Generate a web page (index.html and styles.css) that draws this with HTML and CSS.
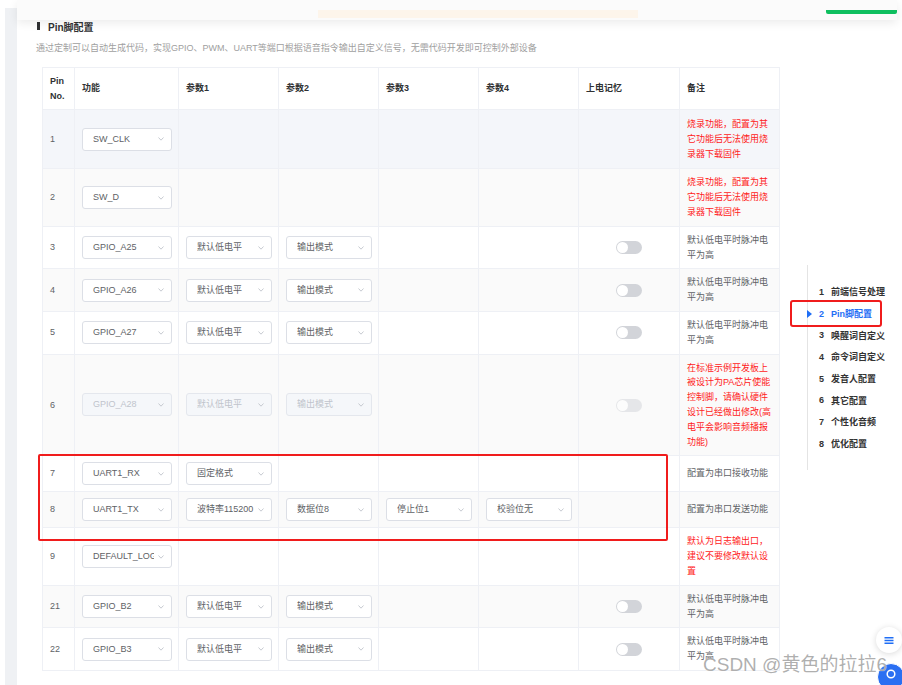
FILE: index.html
```html
<!DOCTYPE html>
<html lang="zh-CN">
<head>
<meta charset="utf-8">
<title>Pin脚配置</title>
<link rel="stylesheet" href="styles.css">
</head>
<body>
<div class="page">
  <div class="gutter"></div>
  <div class="main">
    <div class="topbar">
      <div class="tip-bar"></div>
      <div class="green-bar"></div>
    </div>
    <div class="body">
      <div class="panel">
        <div class="title"><span class="title-mark"></span><span>Pin脚配置</span></div>
        <div class="desc">通过定制可以自动生成代码，实现GPIO、PWM、UART等端口根据语音指令输出自定义信号，无需代码开发即可控制外部设备</div>
        <table class="pins">
          <colgroup>
            <col class="c-pin"><col class="c-func"><col class="c-p"><col class="c-p"><col class="c-p"><col class="c-p"><col class="c-mem"><col class="c-note">
          </colgroup>
          <thead>
            <tr>
              <th class="pin">Pin<br>No.</th><th>功能</th><th>参数1</th><th>参数2</th><th>参数3</th><th>参数4</th><th>上电记忆</th><th>备注</th>
            </tr>
          </thead>
          <tbody>
            <tr class="hover">
              <td class="pin">1</td>
              <td><div class="sel wide"><span class="val">SW_CLK</span><svg class="chev" viewBox="0 0 6 4"><polyline points="0.5,0.5 3,3.2 5.5,0.5"/></svg></div></td>
              <td></td><td></td><td></td><td></td><td></td>
              <td class="note red">烧录功能，配置为其它功能后无法使用烧录器下载固件</td>
            </tr>
            <tr class="stripe">
              <td class="pin">2</td>
              <td><div class="sel wide"><span class="val">SW_D</span><svg class="chev" viewBox="0 0 6 4"><polyline points="0.5,0.5 3,3.2 5.5,0.5"/></svg></div></td>
              <td></td><td></td><td></td><td></td><td></td>
              <td class="note red">烧录功能，配置为其它功能后无法使用烧录器下载固件</td>
            </tr>
            <tr>
              <td class="pin">3</td>
              <td><div class="sel wide"><span class="val">GPIO_A25</span><svg class="chev" viewBox="0 0 6 4"><polyline points="0.5,0.5 3,3.2 5.5,0.5"/></svg></div></td>
              <td><div class="sel"><span class="val">默认低电平</span><svg class="chev" viewBox="0 0 6 4"><polyline points="0.5,0.5 3,3.2 5.5,0.5"/></svg></div></td>
              <td><div class="sel"><span class="val">输出模式</span><svg class="chev" viewBox="0 0 6 4"><polyline points="0.5,0.5 3,3.2 5.5,0.5"/></svg></div></td>
              <td></td><td></td>
              <td class="center"><span class="switch"></span></td>
              <td class="note">默认低电平时脉冲电平为高</td>
            </tr>
            <tr class="stripe">
              <td class="pin">4</td>
              <td><div class="sel wide"><span class="val">GPIO_A26</span><svg class="chev" viewBox="0 0 6 4"><polyline points="0.5,0.5 3,3.2 5.5,0.5"/></svg></div></td>
              <td><div class="sel"><span class="val">默认低电平</span><svg class="chev" viewBox="0 0 6 4"><polyline points="0.5,0.5 3,3.2 5.5,0.5"/></svg></div></td>
              <td><div class="sel"><span class="val">输出模式</span><svg class="chev" viewBox="0 0 6 4"><polyline points="0.5,0.5 3,3.2 5.5,0.5"/></svg></div></td>
              <td></td><td></td>
              <td class="center"><span class="switch"></span></td>
              <td class="note">默认低电平时脉冲电平为高</td>
            </tr>
            <tr>
              <td class="pin">5</td>
              <td><div class="sel wide"><span class="val">GPIO_A27</span><svg class="chev" viewBox="0 0 6 4"><polyline points="0.5,0.5 3,3.2 5.5,0.5"/></svg></div></td>
              <td><div class="sel"><span class="val">默认低电平</span><svg class="chev" viewBox="0 0 6 4"><polyline points="0.5,0.5 3,3.2 5.5,0.5"/></svg></div></td>
              <td><div class="sel"><span class="val">输出模式</span><svg class="chev" viewBox="0 0 6 4"><polyline points="0.5,0.5 3,3.2 5.5,0.5"/></svg></div></td>
              <td></td><td></td>
              <td class="center"><span class="switch"></span></td>
              <td class="note">默认低电平时脉冲电平为高</td>
            </tr>
            <tr class="stripe">
              <td class="pin">6</td>
              <td><div class="sel wide disabled"><span class="val">GPIO_A28</span><svg class="chev" viewBox="0 0 6 4"><polyline points="0.5,0.5 3,3.2 5.5,0.5"/></svg></div></td>
              <td><div class="sel disabled"><span class="val">默认低电平</span><svg class="chev" viewBox="0 0 6 4"><polyline points="0.5,0.5 3,3.2 5.5,0.5"/></svg></div></td>
              <td><div class="sel disabled"><span class="val">输出模式</span><svg class="chev" viewBox="0 0 6 4"><polyline points="0.5,0.5 3,3.2 5.5,0.5"/></svg></div></td>
              <td></td><td></td>
              <td class="center"><span class="switch off"></span></td>
              <td class="note red">在标准示例开发板上被设计为PA芯片使能控制脚，请确认硬件设计已经做出修改(高电平会影响音频播报功能)</td>
            </tr>
            <tr>
              <td class="pin">7</td>
              <td><div class="sel wide"><span class="val">UART1_RX</span><svg class="chev" viewBox="0 0 6 4"><polyline points="0.5,0.5 3,3.2 5.5,0.5"/></svg></div></td>
              <td><div class="sel"><span class="val">固定格式</span><svg class="chev" viewBox="0 0 6 4"><polyline points="0.5,0.5 3,3.2 5.5,0.5"/></svg></div></td>
              <td></td><td></td><td></td><td></td>
              <td class="note">配置为串口接收功能</td>
            </tr>
            <tr class="stripe">
              <td class="pin">8</td>
              <td><div class="sel wide"><span class="val">UART1_TX</span><svg class="chev" viewBox="0 0 6 4"><polyline points="0.5,0.5 3,3.2 5.5,0.5"/></svg></div></td>
              <td><div class="sel"><span class="val">波特率115200</span><svg class="chev" viewBox="0 0 6 4"><polyline points="0.5,0.5 3,3.2 5.5,0.5"/></svg></div></td>
              <td><div class="sel"><span class="val">数据位8</span><svg class="chev" viewBox="0 0 6 4"><polyline points="0.5,0.5 3,3.2 5.5,0.5"/></svg></div></td>
              <td><div class="sel"><span class="val">停止位1</span><svg class="chev" viewBox="0 0 6 4"><polyline points="0.5,0.5 3,3.2 5.5,0.5"/></svg></div></td>
              <td><div class="sel"><span class="val">校验位无</span><svg class="chev" viewBox="0 0 6 4"><polyline points="0.5,0.5 3,3.2 5.5,0.5"/></svg></div></td>
              <td></td>
              <td class="note">配置为串口发送功能</td>
            </tr>
            <tr>
              <td class="pin">9</td>
              <td><div class="sel wide"><span class="val">DEFAULT_LOG</span><svg class="chev" viewBox="0 0 6 4"><polyline points="0.5,0.5 3,3.2 5.5,0.5"/></svg></div></td>
              <td></td><td></td><td></td><td></td><td></td>
              <td class="note red">默认为日志输出口，建议不要修改默认设置</td>
            </tr>
            <tr class="stripe">
              <td class="pin">21</td>
              <td><div class="sel wide"><span class="val">GPIO_B2</span><svg class="chev" viewBox="0 0 6 4"><polyline points="0.5,0.5 3,3.2 5.5,0.5"/></svg></div></td>
              <td><div class="sel"><span class="val">默认低电平</span><svg class="chev" viewBox="0 0 6 4"><polyline points="0.5,0.5 3,3.2 5.5,0.5"/></svg></div></td>
              <td><div class="sel"><span class="val">输出模式</span><svg class="chev" viewBox="0 0 6 4"><polyline points="0.5,0.5 3,3.2 5.5,0.5"/></svg></div></td>
              <td></td><td></td>
              <td class="center"><span class="switch"></span></td>
              <td class="note">默认低电平时脉冲电平为高</td>
            </tr>
            <tr>
              <td class="pin">22</td>
              <td><div class="sel wide"><span class="val">GPIO_B3</span><svg class="chev" viewBox="0 0 6 4"><polyline points="0.5,0.5 3,3.2 5.5,0.5"/></svg></div></td>
              <td><div class="sel"><span class="val">默认低电平</span><svg class="chev" viewBox="0 0 6 4"><polyline points="0.5,0.5 3,3.2 5.5,0.5"/></svg></div></td>
              <td><div class="sel"><span class="val">输出模式</span><svg class="chev" viewBox="0 0 6 4"><polyline points="0.5,0.5 3,3.2 5.5,0.5"/></svg></div></td>
              <td></td><td></td>
              <td class="center"><span class="switch"></span></td>
              <td class="note">默认低电平时脉冲电平为高</td>
            </tr>
          </tbody>
        </table>
      </div>
      <nav class="anchor">
        <div class="anchor-item"><span class="num">1</span>前端信号处理</div>
        <div class="anchor-item active"><span class="num">2</span>Pin脚配置</div>
        <div class="anchor-item"><span class="num">3</span>唤醒词自定义</div>
        <div class="anchor-item"><span class="num">4</span>命令词自定义</div>
        <div class="anchor-item"><span class="num">5</span>发音人配置</div>
        <div class="anchor-item"><span class="num">6</span>其它配置</div>
        <div class="anchor-item"><span class="num">7</span>个性化音频</div>
        <div class="anchor-item"><span class="num">8</span>优化配置</div>
      </nav>
    </div>
  </div>

  <div class="mark mark-table"></div>
  <div class="mark mark-nav"></div>

  <div class="fab fab-menu">
    <svg viewBox="0 0 10 7" class="fab-icon"><path d="M0.5 0.8H9.5M0.5 3.5H9.5M0.5 6.2H9.5"/></svg>
  </div>
  <div class="fab fab-blue">
    <svg viewBox="0 0 12 12" class="fab-ring"><circle cx="6" cy="6" r="3.8"/></svg>
  </div>
  <div class="watermark">CSDN @黄色的拉拉6</div>
</div>
</body>
</html>
```

FILE: styles.css
```css
html, body {
  margin: 0;
  padding: 0;
  background: #ffffff;
}

body {
  font-family: "Liberation Sans", "Noto Sans CJK SC", sans-serif;
  color: #606266;
  font-size: 9px;
}

.page {
  position: relative;
  display: flex;
  width: 902px;
  height: 685px;
  overflow: hidden;
}

.gutter {
  width: 12px;
  margin: 8px 0 0 5px;
  background: #eff1f4;
  flex: none;
}

.main {
  width: 880px;
  flex: none;
  display: flex;
  flex-direction: column;
}

.topbar {
  position: relative;
  z-index: 1;
  height: 20px;
  box-sizing: border-box;
  padding-top: 10px;
  display: flex;
  align-items: flex-start;
  background: #fbfbfb;
  box-shadow: 0 3px 10px rgba(0, 0, 0, 0.08);
}

.tip-bar {
  margin-left: 301px;
  width: 320px;
  height: 8px;
  background: #fdf5eb;
}

.green-bar {
  margin-left: auto;
  width: 71px;
  height: 4px;
  background: #0fbf5f;
  border-radius: 0 0 2px 2px;
}

.body {
  display: flex;
  align-items: flex-start;
}

.panel {
  width: 762px;
  flex: none;
  box-sizing: border-box;
  padding-left: 20px;
}

.title {
  display: flex;
  align-items: center;
  height: 12px;
  font-size: 10px;
  font-weight: 700;
  color: #303133;
}

.title-mark {
  width: 2.5px;
  height: 8px;
  background: #303133;
  margin-right: 8.5px;
}

.desc {
  margin: 10px 0 0 -1px;
  line-height: 12px;
  font-size: 9px;
  color: #a0a0a0;
  white-space: nowrap;
}

.pins {
  margin: 13px 0 0 5px;
  width: 737px;
  table-layout: fixed;
  border-collapse: collapse;
  border: 1px solid #eef0f5;
}

.c-pin { width: 32px; }
.c-func { width: 104px; }
.c-p { width: 100px; }
.c-mem { width: 101px; }
.c-note { width: 100px; }

.pins th,
.pins td {
  border: 1px solid #eef0f5;
  padding: 6px 7px;
  text-align: left;
  vertical-align: middle;
}

.pins th {
  padding-top: 5.5px;
  padding-bottom: 5.5px;
  line-height: 15px;
  font-weight: 700;
  color: #303133;
  background: #ffffff;
}

.pins th.pin,
.pins td.pin {
  padding-left: 7px;
  padding-right: 2px;
}

.pins td {
  line-height: 14.8px;
  color: #606266;
}

.pins tr.stripe td {
  background: #fafafa;
}

.pins tr.hover td {
  background: #f4f6fa;
  padding-top: 7px;
  padding-bottom: 7px;
}

.pins td.center {
  text-align: center;
}

.note {
  word-break: break-all;
}

.note.red {
  color: #ff1a1a;
}

.sel {
  display: flex;
  align-items: center;
  box-sizing: border-box;
  width: 86px;
  height: 23px;
  padding: 0 7px 0 10px;
  border: 1px solid #dcdfe6;
  border-radius: 3px;
  background: #ffffff;
  color: #606266;
}

.sel.wide {
  width: 90px;
}

.sel .val {
  flex: 1;
  min-width: 0;
  overflow: hidden;
  white-space: nowrap;
  line-height: 21px;
}

.chev {
  flex: none;
  width: 6px;
  height: 4px;
  margin-left: 4px;
  fill: none;
  stroke: #c0c4cc;
  stroke-width: 0.9;
}

.sel.disabled {
  background: #f5f7fa;
  border-color: #e4e7ed;
  color: #c0c4cc;
}

.switch {
  display: inline-block;
  position: relative;
  width: 26px;
  height: 13px;
  border-radius: 7px;
  background: #d2d4d9;
  vertical-align: middle;
}

.switch::after {
  content: "";
  position: absolute;
  left: 1px;
  top: 1px;
  width: 11px;
  height: 11px;
  border-radius: 50%;
  background: #ffffff;
}

.switch.off {
  opacity: 0.5;
}

.anchor {
  margin: 245px 0 0 28px;
  height: 205px;
  box-sizing: border-box;
  padding-top: 16px;
  border-left: 1px solid #e4e4e4;
  flex: none;
}

.anchor-item {
  position: relative;
  display: flex;
  align-items: center;
  height: 21.7px;
  padding-left: 11px;
  font-size: 9px;
  font-weight: 700;
  color: #333333;
  white-space: nowrap;
}

.anchor-item .num {
  width: 12px;
}

.anchor-item.active {
  color: #1f6ef5;
}

.anchor-item.active::before {
  content: "";
  position: absolute;
  left: -1px;
  top: 50%;
  margin-top: -4px;
  border-left: 5px solid #1f6ef5;
  border-top: 4px solid transparent;
  border-bottom: 4px solid transparent;
}

.mark {
  position: absolute;
  border: 2px solid #f01c1c;
  border-radius: 2px;
  box-sizing: border-box;
}

.mark-table {
  left: 38px;
  top: 454px;
  width: 630px;
  height: 87px;
}

.mark-nav {
  left: 790px;
  top: 300px;
  width: 92px;
  height: 27px;
  border-radius: 3px;
}

.fab {
  position: absolute;
  width: 26px;
  height: 26px;
  border-radius: 50%;
  display: flex;
  align-items: center;
  justify-content: center;
}

.fab-menu {
  left: 876px;
  top: 627px;
  background: #ffffff;
  box-shadow: 0 1px 6px rgba(0, 0, 0, 0.15);
}

.fab-icon {
  width: 10px;
  height: 7px;
  fill: none;
  stroke: #1f6ef5;
  stroke-width: 1.4;
}

.fab-blue {
  left: 877px;
  top: 663px;
  background: #2a6ff2;
  border: 1px solid #ffffff;
}

.fab-ring {
  width: 12px;
  height: 12px;
  fill: none;
  stroke: #ffffff;
  stroke-width: 1.5;
  margin-top: -6px;
}

.watermark {
  position: absolute;
  left: 703px;
  top: 654px;
  font-size: 19px;
  line-height: 22px;
  color: rgba(140, 140, 140, 0.7);
  text-shadow: 0 0 1px #ffffff;
  white-space: nowrap;
}
```
